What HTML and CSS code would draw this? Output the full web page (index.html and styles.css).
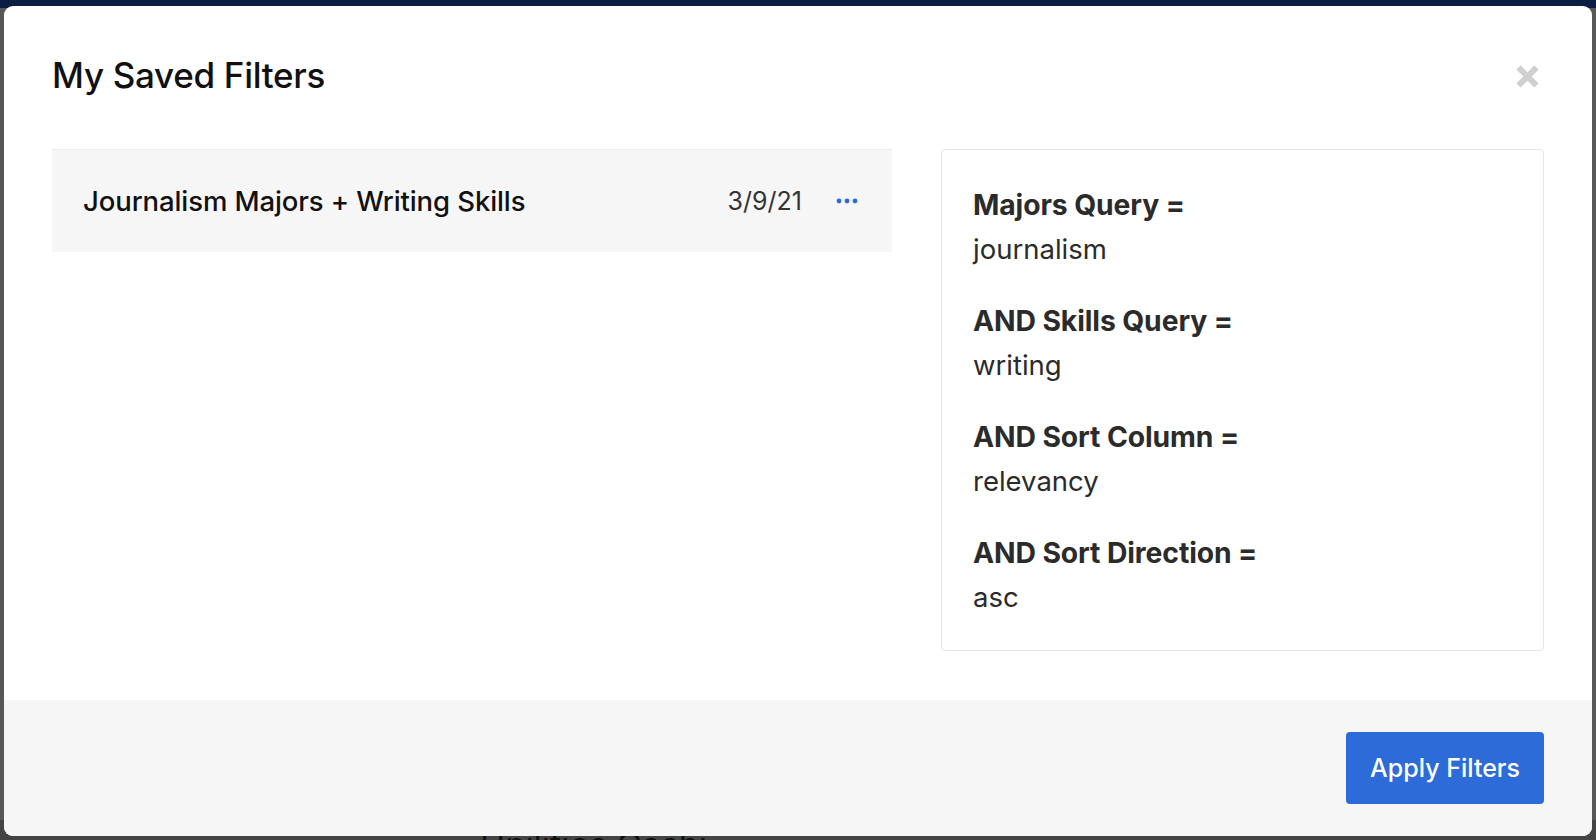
FILE: index.html
```html
<!doctype html>
<html>
  <head>
    <meta charset="utf-8">
    <title>My Saved Filters</title>
    <link rel="stylesheet" href="styles.css">
  </head>
  <body>
    <div class='backdrop'>
      <div class='topbar'></div>
      <div class='page-peek'>Unilities Cashi</div>
    </div>

    <div class='modal'>
      <header class='modal-header'>
        <h1 class='modal-title'>My Saved Filters</h1>
        <button class='close-btn' aria-label='Close'>
          <svg width='25' height='25' viewBox='0 0 25 25'>
            <path d='M3.5 3.5 L21.5 21.5 M21.5 3.5 L3.5 21.5' stroke='#cfcfcf' stroke-width='6' />
          </svg>
        </button>
      </header>

      <main class='modal-body'>
        <div class='filter-list'>
          <div class='filter-row'>
            <span class='filter-name'>Journalism Majors + Writing Skills</span>
            <span class='filter-date'>3/9/21</span>
            <span class='filter-menu'>
              <svg width='22' height='6' viewBox='0 0 22 6'>
                <circle cx='3' cy='3' r='2.4' fill='#2b6bd8' />
                <circle cx='11' cy='3' r='2.4' fill='#2b6bd8' />
                <circle cx='19' cy='3' r='2.4' fill='#2b6bd8' />
              </svg>
            </span>
          </div>
        </div>

        <div class='filter-detail'>
          <div class='detail-group'>
            <div class='detail-label'>Majors Query =</div>
            <div class='detail-value'>journalism</div>
          </div>
          <div class='detail-group'>
            <div class='detail-label'>AND Skills Query =</div>
            <div class='detail-value'>writing</div>
          </div>
          <div class='detail-group'>
            <div class='detail-label'>AND Sort Column =</div>
            <div class='detail-value'>relevancy</div>
          </div>
          <div class='detail-group'>
            <div class='detail-label'>AND Sort Direction =</div>
            <div class='detail-value'>asc</div>
          </div>
        </div>
      </main>

      <footer class='modal-footer'>
        <button class='apply-btn'>Apply Filters</button>
      </footer>
    </div>
  </body>
</html>
```

FILE: styles.css
```css
:root {
  --text-color: #111;
  --muted-color: #333;
  --blue: #2d6bd9;
  --light-bg: #f6f6f6;
  --border-color: #e6e6e6;
  --radius: 4px;
}

body {
  margin: 0;
  height: 840px;
  overflow: hidden;
  font-family: Inter, "Noto Sans", sans-serif;
  color: var(--text-color);
  background: #575757;
  position: relative;
}

/* page behind the overlay */
.backdrop {
  position: absolute;
  inset: 0;
  display: flex;
  flex-direction: column;
}

.topbar {
  height: 8px;
  background: #0b1d42;
}

.page-peek {
  margin-top: auto;
  height: 20px;
  background: #444;
  color: #111;
  font-size: 34px;
  line-height: 50px;
  padding-left: 480px;
  overflow: hidden;
}

.modal {
  position: absolute;
  top: 6px;
  left: 4px;
  width: 1588px;
  height: 830px;
  background: #fff;
  border-radius: 9px;
  display: flex;
  flex-direction: column;
  overflow: hidden;
}

.modal-header {
  display: flex;
  align-items: center;
  justify-content: space-between;
  padding: 47px 52px 0 48px;
}

.modal-title {
  margin: 0;
  font-size: 35px;
  font-weight: 500;
  line-height: 44px;
  letter-spacing: -0.3px;
}

.close-btn {
  border: none;
  background: none;
  padding: 0;
  display: flex;
  margin-top: 3px;
}

.modal-body {
  flex: 1;
  display: grid;
  grid-template-columns: 840fr 603fr;
  gap: 49px;
  align-items: start;
  padding: 52px 48px 0 48px;
}

.filter-row {
  display: flex;
  align-items: center;
  height: 102px;
  padding: 0 34px 0 31px;
  background: var(--light-bg);
  border-top: 1px solid #eeeeee;
}

.filter-name {
  flex: 1;
  font-size: 27.5px;
  font-weight: 500;
  letter-spacing: -0.1px;
}

.filter-date {
  font-size: 25px;
  color: var(--muted-color);
  margin-right: 34px;
}

.filter-menu {
  display: flex;
  margin-top: -1px;
}

.filter-detail {
  border: 1px solid var(--border-color);
  border-radius: var(--radius);
  padding: 33px 32px 31px 31px;
  display: flex;
  flex-direction: column;
  gap: 28px;
}

.detail-label {
  font-size: 28.3px;
  font-weight: 700;
  color: #2b2b2b;
  line-height: 44px;
  letter-spacing: -0.1px;
}

.detail-value {
  font-size: 27.5px;
  color: #2b2b2b;
  line-height: 44px;
}

.modal-footer {
  height: 136px;
  background: var(--light-bg);
  display: flex;
  align-items: center;
  justify-content: flex-end;
  padding: 0 48px;
}

.apply-btn {
  width: 198px;
  height: 72px;
  border: none;
  border-radius: var(--radius);
  background: var(--blue);
  color: #fff;
  font-family: inherit;
  font-size: 25px;
  font-weight: 500;
}
```
